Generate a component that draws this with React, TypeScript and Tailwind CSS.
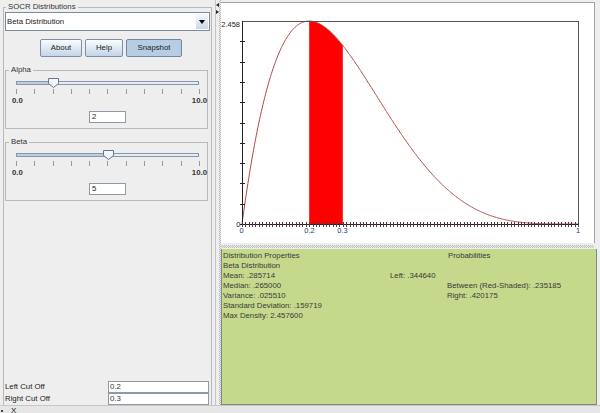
import React from "react";

// Beta(2, 5) density, drawn on the chart
const pdf = (x: number) => 30 * x * Math.pow(1 - x, 4);

const X0 = 242;
const X1 = 578;
const YTOP = 21;
const YBASE = 224;
const YMAX = 2.458;
const px = (x: number) => X0 + x * (X1 - X0);
const py = (y: number) => YBASE - (y / YMAX) * (YBASE - YTOP);

const curvePoints = (a: number, b: number, steps: number) => {
  const pts: string[] = [];
  for (let i = 0; i <= steps; i++) {
    const x = a + ((b - a) * i) / steps;
    pts.push(`${px(x).toFixed(2)},${py(pdf(x)).toFixed(2)}`);
  }
  return pts;
};

const Chart = () => {
  const curve = curvePoints(0, 1, 400);
  const shade = [`${px(0.2)},${YBASE}`, ...curvePoints(0.2, 0.3, 40), `${px(0.3)},${YBASE}`];
  const yTicks = Array.from({ length: 10 }, (_, i) => YTOP + ((YBASE - YTOP) * (i + 1)) / 10);
  const xTicks = Array.from({ length: 101 }, (_, i) => px(i / 100));

  return (
    <svg width={373} height={240} viewBox="221 3 373 240" className="block">
      <polygon points={shade.join(" ")} fill="#ff0000" />
      <polyline points={curve.join(" ")} fill="none" stroke="#b04a4a" strokeWidth={1} />
      <g shapeRendering="crispEdges">
        <path d={`M${X0 + 0.5} ${YTOP + 0.5}H${X1 + 0.5}V${YBASE + 0.5}`} fill="none" stroke="#555" />
        <line x1={X0 + 0.5} y1={YTOP} x2={X0 + 0.5} y2={YBASE + 1} stroke="#222" />
        <line x1={X0} y1={YBASE + 0.5} x2={X1 + 1} y2={YBASE + 0.5} stroke="#222" />
        {yTicks.map((y, i) => (
          <line key={i} x1={X0 - 2} y1={Math.round(y) + 0.5} x2={X0 + 3} y2={Math.round(y) + 0.5} stroke="#222" />
        ))}
        {xTicks.map((x, i) => (
          <line key={i} x1={Math.round(x) + 0.5} y1={YBASE - 2} x2={Math.round(x) + 0.5} y2={YBASE + 3} stroke="#5a3444" />
        ))}
      </g>
      <g fontFamily="'Liberation Sans', Arial, sans-serif" fontSize={7.5}>
        <text x={240} y={26.5} textAnchor="end" fill="#222">2.458</text>
        <text x={240.5} y={227} textAnchor="end" fill="#222">0</text>
        <text x={241.5} y={233} textAnchor="middle" fill="#2d3a6b">0</text>
        <text x={309.5} y={233} textAnchor="middle" fill="#2d3a6b">0.2</text>
        <text x={342.5} y={233} textAnchor="middle" fill="#2d3a6b">0.3</text>
        <text x={578} y={233} textAnchor="middle" fill="#2d3a6b">1</text>
      </g>
    </svg>
  );
};

const Button = ({ label, width, pressed }: { label: string; width: string; pressed?: boolean }) => (
  <button
    className={
      pressed
        ? `${width} h-[18px] rounded-[2px] border border-[#6f87a8] bg-[#b8cde2] text-[#222]`
        : `${width} h-[18px] rounded-[2px] border border-[#7d8fa6] bg-gradient-to-b from-[#fbfcfe] to-[#c3d5e8] text-[#222]`
    }
  >
    {label}
  </button>
);

const Slider = ({ label, value, gap }: { label: string; value: number; gap: string }) => {
  const pct = value / 10;
  return (
    <fieldset className={`${gap} ml-[1px] w-[203px] border border-[#b8b8b8] pb-[5px]`}>
      <legend className="ml-[3px] h-[10px] px-[2px] leading-[10px] text-[#333]">{label}</legend>
      <div className="relative ml-[10px] mt-[6px] h-[4px] w-[183px] border border-[#8797ad] bg-[#e8ecf1]">
        <div className="h-full bg-[#bccde2]" style={{ width: `${pct * 100}%` }} />
        <svg
          className="absolute top-[-4px]"
          style={{ left: pct * 181 - 5 }}
          width={11}
          height={10}
          viewBox="0 0 11 10"
        >
          <path d="M0.5 0.5H10.5V5.5L5.5 9.5L0.5 5.5Z" fill="#f3f6fa" stroke="#66768c" />
        </svg>
      </div>
      <div className="ml-[10px] mt-[4px] flex h-[5px] w-[184px] justify-between">
        {Array.from({ length: 11 }, (_, i) => (
          <span key={i} className="h-full w-px bg-[#9a9a9a]" />
        ))}
      </div>
      <div className="ml-[6px] mt-[2px] flex h-[10px] w-[195px] justify-between font-bold leading-[10px] text-[#333]">
        <span>0.0</span>
        <span>10.0</span>
      </div>
      <div className="ml-[83px] mt-[5px] h-[12px] w-[37px] border border-[#8e9aa6] bg-white pl-[2px] leading-[10px] text-[#222]">
        {value}
      </div>
    </fieldset>
  );
};

const CutOff = ({ label, value }: { label: string; value: string }) => (
  <div className="flex h-[12px] items-center">
    <span className="w-[104px] pl-[1px] text-[#222]">{label}</span>
    <div className="h-[12px] w-[101px] border border-[#8e9aa6] bg-white pl-[1px] leading-[10px] text-[#333]">
      {value}
    </div>
  </div>
);

const LeftPanel = () => (
  <div className="h-full w-[213px] shrink-0">
    <fieldset className="ml-[3px] mt-[2px] h-[403px] w-[209px] border border-b-0 border-[#b8b8b8]">
      <legend className="ml-[2px] h-[10px] px-[2px] leading-[10px] text-[#333]">SOCR Distributions</legend>
      <div className="flex h-[393px] flex-col">
        <div className="ml-[1px] flex h-[19px] w-[205px] items-center border border-[#7d8c9b] bg-white">
          <span className="flex-1 pl-[1px] text-[#222]">Beta Distribution</span>
          <span className="mr-[1px] flex h-[15px] w-[12px] items-center justify-center bg-gradient-to-b from-[#f7f9fc] to-[#c9d8e8]">
            <span className="h-0 w-0 border-x-[3px] border-t-[4px] border-x-transparent border-t-black" />
          </span>
        </div>

        <div className="ml-[36px] mt-[8px] flex gap-[3px]">
          <Button label="About" width="w-[42px]" />
          <Button label="Help" width="w-[38px]" />
          <Button label="Snapshot" width="w-[56px]" pressed />
        </div>

        <Slider label="Alpha" value={2} gap="mt-[8px]" />
        <Slider label="Beta" value={5} gap="mt-[8px]" />

        <div className="flex-1" />
        <CutOff label="Left Cut Off" value="0.2" />
        <CutOff label="Right Cut Off" value="0.3" />
      </div>
    </fieldset>
  </div>
);

const Divider = () => (
  <div className="flex h-full w-[8px] shrink-0">
    <div className="w-[2px]" />
    <div className="w-px bg-[#c4c4c4]" />
    <div className="flex w-[3px] flex-col items-start pt-[3px]">
      <span className="h-0 w-0 border-y-[2px] border-r-[3px] border-y-transparent border-r-[#222]" />
      <span className="mt-[3px] h-0 w-0 border-y-[2px] border-l-[3px] border-y-transparent border-l-[#222]" />
    </div>
    <div className="w-[2px] bg-[conic-gradient(#b4b4b4_25%,#eeeeee_0_50%,#b4b4b4_0_75%,#eeeeee_0)] bg-[length:2px_2px]" />
  </div>
);

const Props = () => (
  <div className="grid grid-cols-[167px_57px_1fr] leading-[10px] text-[#3a3a3a]">
    <span>Distribution Properties</span>
    <span />
    <span className="pl-[1px]">Probabilities</span>

    <span>Beta Distribution</span>
    <span />
    <span />

    <span>Mean: .285714</span>
    <span className="whitespace-nowrap">Left: .344640</span>
    <span />

    <span>Median: .265000</span>
    <span />
    <span>Between (Red-Shaded): .235185</span>

    <span>Variance: .025510</span>
    <span />
    <span>Right: .420175</span>

    <span>Standard Deviation: .159719</span>
    <span />
    <span />

    <span>Max Density: 2.457600</span>
    <span />
    <span />
  </div>
);

const RightPanel = () => (
  <div className="flex h-full flex-1 flex-col">
    <div className="mr-[5px] mt-[2px] h-[241px] border-r border-t border-[#a2a2a2] bg-white">
      <Chart />
    </div>
    <div className="mr-[6px] flex h-[6px] items-center">
      <div className="h-[3px] w-full bg-[conic-gradient(#bdbdbd_25%,#eeeeee_0_50%,#bdbdbd_0_75%,#eeeeee_0)] bg-[length:2px_2px]" />
    </div>
    <div className="mr-[3px] flex-1 border-x border-b border-[#7c8a86] bg-[#c4d98c] pl-[1px] pt-[2px]">
      <Props />
    </div>
  </div>
);

export default function App() {
  return (
    <div className="flex h-[413px] w-[600px] flex-col overflow-hidden bg-[#eeeeee] font-['Liberation_Sans',Arial,sans-serif] text-[7.8px]">
      <div className="flex h-[405px]">
        <LeftPanel />
        <Divider />
        <RightPanel />
      </div>
      <div className="flex h-[8px] items-start border-t border-[#c6c6c6] bg-[#e6e6e6] leading-[10px] text-[#222]">
        <span className="ml-[1px] mt-[4px] h-[2px] w-[2px] bg-[#444]" />
        <span className="ml-[8px] text-[8px]">X</span>
      </div>
    </div>
  );
}
